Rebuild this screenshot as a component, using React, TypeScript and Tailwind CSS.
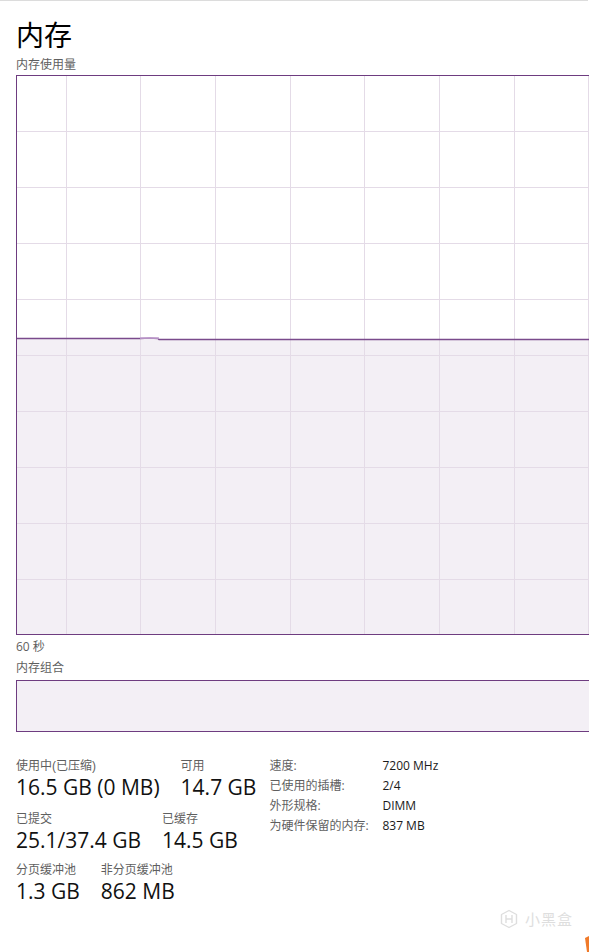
import React from 'react';

const FONT = { fontFamily: "'Open Sans', 'Noto Sans CJK SC', sans-serif" };
const LABEL_FONT = { fontFamily: "'Liberation Sans', 'Noto Sans CJK SC', sans-serif" };

const vLines = [49, 123, 198, 273, 347, 422, 497, 571];
const hLines = [55, 111, 167, 223, 279, 335, 391, 447, 503];

const UsageChart = () => (
  <div className="w-[580px] h-[560px] border-l border-t border-b border-[#6e3c80] mt-[2px]">
    <svg width="579" height="558" viewBox="0 0 579 558" className="block">
      <polygon
        points="0,262.5 123,262.5 133,262 141,262.5 142,263.5 579,263.5 579,558 0,558"
        fill="#f3eff5"
      />
      {vLines.map((x) => (
        <line key={'v' + x} x1={x + 0.5} y1={0} x2={x + 0.5} y2={558} stroke="#e4dbe7" strokeWidth={1} />
      ))}
      {hLines.map((y) => (
        <line key={'h' + y} x1={0} y1={y + 0.5} x2={579} y2={y + 0.5} stroke="#e4dbe7" strokeWidth={1} />
      ))}
      <polyline
        points="0,262.5 123,262.5 133,262 141,262.5 142,263.5 579,263.5"
        fill="none"
        stroke="#7a4a8c"
        strokeWidth={1.4}
      />
      <line x1={123} y1={262} x2={142} y2={262} stroke="#c9a8d6" strokeWidth={1.5} />
    </svg>
  </div>
);

const Stat = ({ label, value }: { label: string; value: string }) => (
  <div>
    <div className="text-[12px] leading-[14px] text-[#5f5f5f]" style={LABEL_FONT}>{label}</div>
    <div className="text-[21px] leading-[29px] text-[#111]">{value}</div>
  </div>
);

const details = [
  ['速度:', '7200 MHz'],
  ['已使用的插槽:', '2/4'],
  ['外形规格:', 'DIMM'],
  ['为硬件保留的内存:', '837 MB'],
];

const App = () => {
  return (
    <div className="relative w-[589px] h-[952px] bg-white overflow-hidden" style={FONT}>
      <div className="h-px bg-[#dcdcdc] w-[588px]" />
      <div className="pl-4">
        <div className="pt-[16px] text-[28px] leading-[36px] text-black">内存</div>
        <div className="mt-[4px] text-[12px] leading-[16px] text-[#5f5f5f]">内存使用量</div>
        <UsageChart />
        <div className="mt-[4px] text-[12px] leading-[16px] text-[#5f5f5f]">60 秒</div>
        <div className="mt-[5px] text-[12px] leading-[16px] text-[#5f5f5f]">内存组合</div>
        <div className="mt-[4px] w-[580px] h-[52px] border-l border-t border-b border-[#6e3c80] bg-[#f3eff5]" />

        <div className="mt-[27px] flex gap-[13px]">
          <div className="flex flex-col gap-[10px]">
            <div className="flex gap-[21px]">
              <Stat label="使用中(已压缩)" value="16.5 GB (0 MB)" />
              <Stat label="可用" value="14.7 GB" />
            </div>
            <div className="flex gap-[21px]">
              <Stat label="已提交" value="25.1/37.4 GB" />
              <Stat label="已缓存" value="14.5 GB" />
            </div>
            <div className="flex gap-[21px] mt-[-2px]">
              <Stat label="分页缓冲池" value="1.3 GB" />
              <Stat label="非分页缓冲池" value="862 MB" />
            </div>
          </div>
          <div className="flex flex-col mt-[-3px]">
            {details.map(([k, v]) => (
              <div key={k} className="flex h-[20px] items-center text-[12px]">
                <span className="w-[113px] text-[#5f5f5f]">{k}</span>
                <span className="text-[#1a1a1a]">{v}</span>
              </div>
            ))}
          </div>
        </div>
      </div>

      <div className="absolute left-[499px] top-[909px] flex items-center gap-[6px] text-[#dedede]">
        <svg width="20" height="20" viewBox="0 0 20 20" fill="none" stroke="#dedede" strokeWidth="1.4">
          <path d="M10 1.5 L17.5 5.5 L17.5 14.5 L10 18.5 L2.5 14.5 L2.5 5.5 Z" strokeLinejoin="round" />
          <path d="M7 6 V14 M13 6 V14 M7 10 H13" />
        </svg>
        <span className="text-[15px] leading-[18px] tracking-[1px]">小黑盒</span>
      </div>
      <svg className="absolute left-[582px] top-[936px]" width="7" height="16" viewBox="0 0 7 16">
        <path d="M3 2 L7 0 L7 16 L5 16 Z" fill="#f07a2a" />
      </svg>
    </div>
  );
};

export default App;
